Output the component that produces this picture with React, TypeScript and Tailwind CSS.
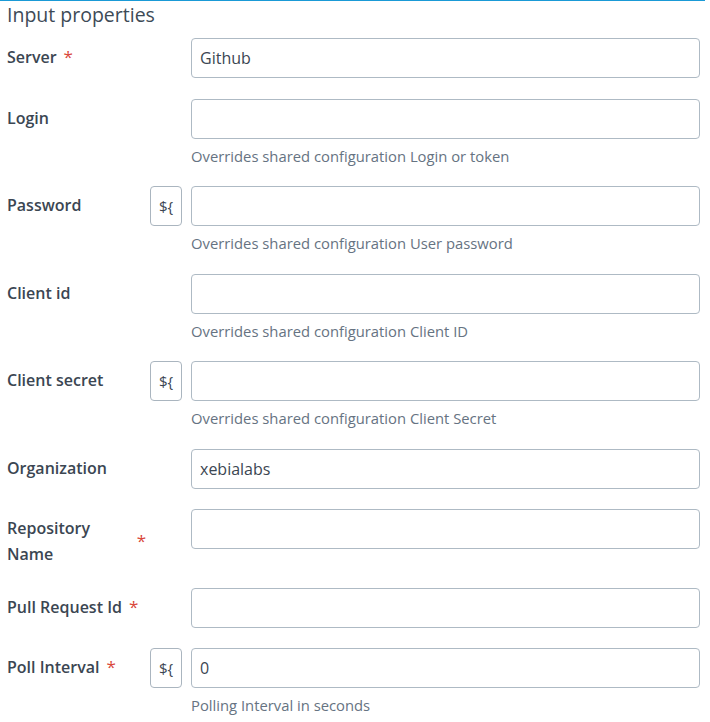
import React from "react"

type Field = {
  label: string
  required?: boolean
  value?: string
  help?: string
  variable?: boolean
}

const fields: Field[] = [
  { label: "Server", required: true, value: "Github" },
  { label: "Login", help: "Overrides shared configuration Login or token" },
  { label: "Password", variable: true, help: "Overrides shared configuration User password" },
  { label: "Client id", help: "Overrides shared configuration Client ID" },
  { label: "Client secret", variable: true, help: "Overrides shared configuration Client Secret" },
  { label: "Organization", value: "xebialabs" },
  { label: "Repository Name", required: true },
  { label: "Pull Request Id", required: true },
  { label: "Poll Interval", required: true, variable: true, value: "0", help: "Polling Interval in seconds" },
]

function FieldRow({ field }: { field: Field }) {
  return (
    <div className="flex mb-[20.5px]">
      {/* Label */}
      <div className="w-[143px] shrink-0 pt-[6px] flex items-center self-start">
        <span className="text-[16px] leading-[26px] font-semibold text-[#3b4652]">
          {field.label}
        </span>
        {field.required && (
          <span className="ml-[7px] mr-[4px] text-[17px] leading-[26px] text-[#d9473a] shrink-0">*</span>
        )}
      </div>

      {/* Variable toggle */}
      <div className="w-[41px] shrink-0">
        {field.variable && (
          <button className="w-[32px] h-[40px] rounded-[4px] border border-[#aab5bf] bg-white text-[15px] text-[#3b4652] flex items-center justify-center">
            {"${"}
          </button>
        )}
      </div>

      {/* Input */}
      <div className="flex-1 flex flex-col">
        <input
          defaultValue={field.value ?? ""}
          className="h-[40px] w-full rounded-[4px] border border-[#aebac4] bg-white px-[8px] text-[16px] text-[#3b4652] outline-none"
        />
        {field.help && (
          <div className="mt-[7px] text-[14.8px] leading-[20px] text-[#667382]">{field.help}</div>
        )}
      </div>
    </div>
  )
}

export default function App() {
  return (
    <div
      className="w-[705px] bg-white border-t border-[#1a9ad6] pl-[7px] pr-[5px]"
      style={{ fontFamily: '"Open Sans", "Noto Sans", sans-serif' }}
    >
      <h3 className="pt-[1px] mb-[10px] text-[19.5px] leading-[26px] font-normal text-[#3d4a56]">
        Input properties
      </h3>
      {fields.map((f) => (
        <FieldRow key={f.label} field={f} />
      ))}
    </div>
  )
}
